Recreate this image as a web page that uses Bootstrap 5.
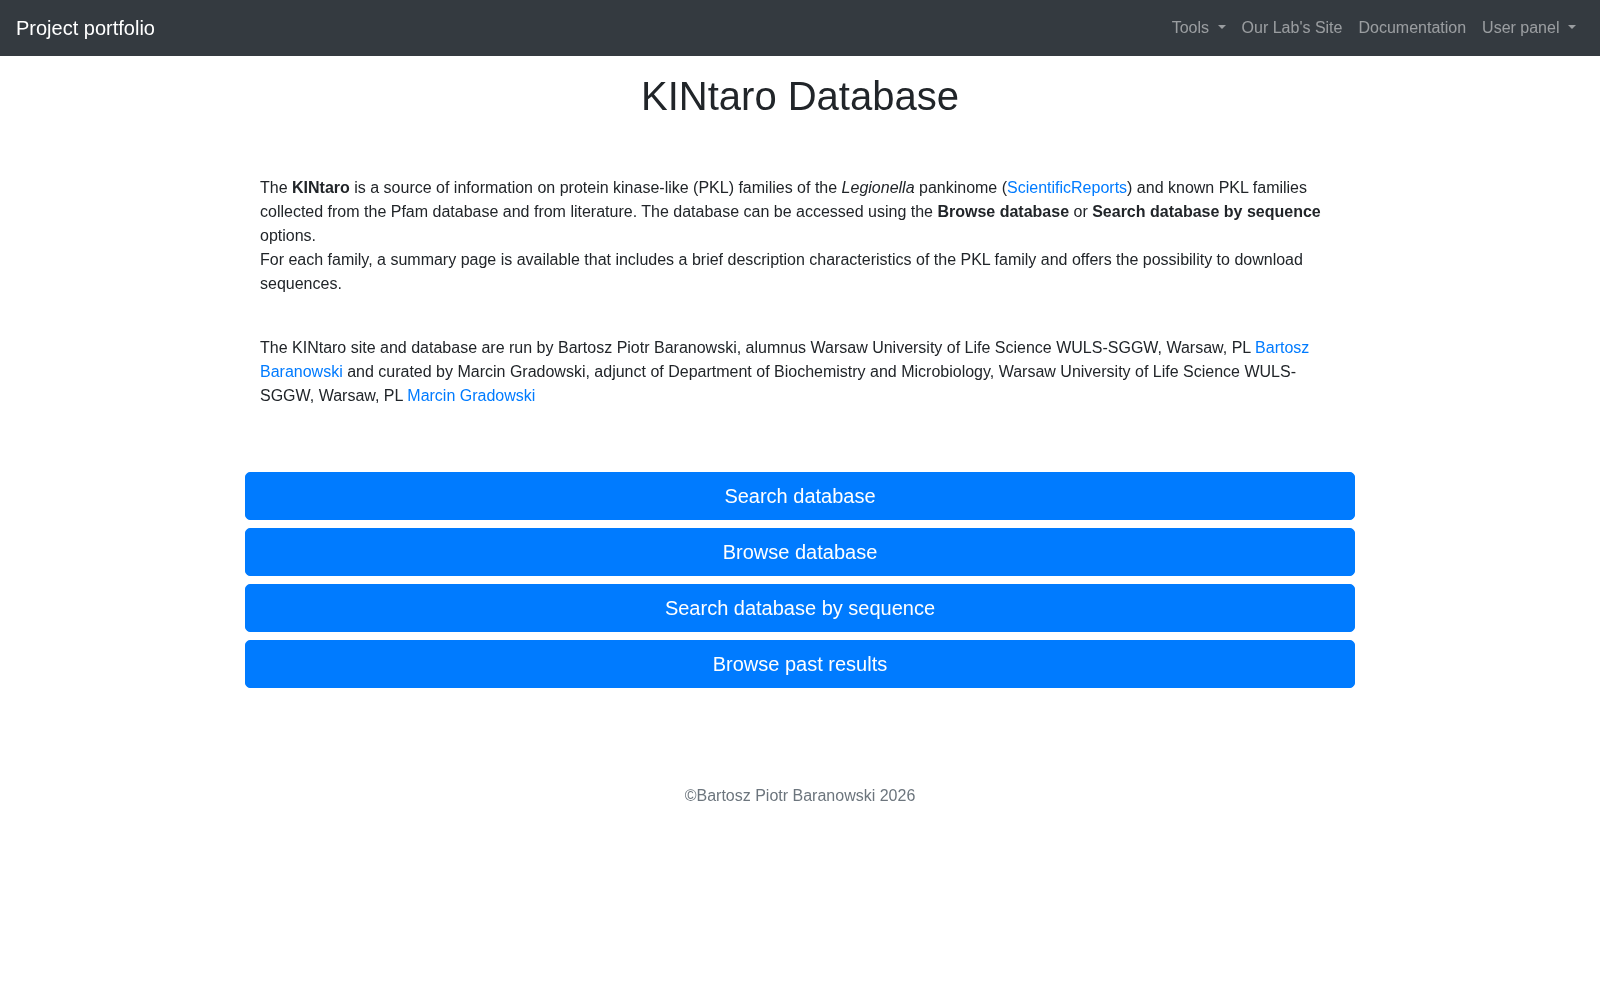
<!DOCTYPE html>
<html lang="en">
<head>
    <meta charset="UTF-8">
    <title>KINtaro Database</title>
    <link rel="stylesheet" href="https://cdn.jsdelivr.net/npm/bootstrap@5.3.0/dist/css/bootstrap.min.css">
    <style>
        body { font-family: "Liberation Sans", Arial, sans-serif; color: #212529; }
        a { color: #007bff; text-decoration: none; }
        .navbar, .page { will-change: transform; }
        .navbar { background: #343a40; padding: 8px 16px; }
        .navbar-brand { font-size: 20px; padding: 5px 0; margin-right: 16px; }
        .navbar .nav-link { color: rgba(255,255,255,.5); padding: 8px; }
        .page { max-width: 1140px; padding: 0 15px; }
        .page-title { font-size: 40px; font-weight: 500; line-height: 48px; margin: 16px 0 56px; }
        .intro { padding: 0 15px; margin-bottom: 64px; }
        .intro p { margin-bottom: 40px; }
        .intro p:last-child { margin-bottom: 0; }
        .btn-portal { background: #007bff; border-color: #007bff; color: #fff; font-size: 20px; padding: 8px 16px; line-height: 30px; border-radius: 5px; }
        .footer-note { color: #6c757d; margin-top: 96px; }
    </style>
</head>
<body>
    <nav class="navbar navbar-expand-lg navbar-dark">
        <a class="navbar-brand" href="#">Project portfolio</a>
        <ul class="navbar-nav ms-auto">
            <li class="nav-item dropdown"><a class="nav-link dropdown-toggle" href="#">Tools </a></li>
            <li class="nav-item"><a class="nav-link" href="#">Our Lab's Site</a></li>
            <li class="nav-item"><a class="nav-link" href="#">Documentation</a></li>
            <li class="nav-item dropdown"><a class="nav-link dropdown-toggle" href="#">User panel </a></li>
        </ul>
    </nav>
    <main class="container page">
        <h1 class="page-title text-center">KINtaro Database</h1>
        <div class="intro">
            <p>The <b>KINtaro</b> is a source of information on protein kinase-like (PKL) families of the <i>Legionella</i> pankinome (<a href="#">ScientificReports</a>) and known PKL families collected from the Pfam database and from literature. The database can be accessed using the <b>Browse database</b> or <b>Search database by sequence</b> options.<br>For each family, a summary page is available that includes a brief description characteristics of the PKL family and offers the possibility to download sequences.</p>
            <p>The KINtaro site and database are run by Bartosz Piotr Baranowski, alumnus Warsaw University of Life Science WULS-SGGW, Warsaw, PL <a href="#">Bartosz Baranowski</a> and curated by Marcin Gradowski, adjunct of Department of Biochemistry and Microbiology, Warsaw University of Life Science WULS-SGGW, Warsaw, PL <a href="#">Marcin Gradowski</a></p>
        </div>
        <div class="d-grid gap-2">
            <a class="btn btn-portal" href="#">Search database</a>
            <a class="btn btn-portal" href="#">Browse database</a>
            <a class="btn btn-portal" href="#">Search database by sequence</a>
            <a class="btn btn-portal" href="#">Browse past results</a>
        </div>
        <p class="footer-note text-center">©Bartosz Piotr Baranowski 2026</p>
    </main>
    <script src="https://cdn.jsdelivr.net/npm/bootstrap@5.3.0/dist/js/bootstrap.bundle.min.js"></script>
</body>
</html>
